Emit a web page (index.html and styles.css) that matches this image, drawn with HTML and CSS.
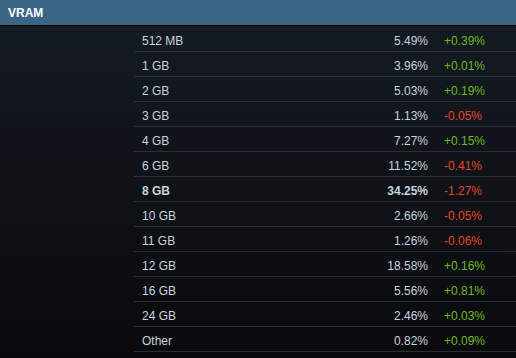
FILE: index.html
```html
<!DOCTYPE html>
<html>
<head>
<meta charset="utf-8">
<link rel="stylesheet" href="styles.css">
</head>
<body>
<div class="panel">
  <div class="header">VRAM</div>
  <div class="rows">
    <div class="row"><span class="label">512 MB</span><span class="pct">5.49%</span><span class="chg up">+0.39%</span></div>
    <div class="row"><span class="label">1 GB</span><span class="pct">3.96%</span><span class="chg up">+0.01%</span></div>
    <div class="row"><span class="label">2 GB</span><span class="pct">5.03%</span><span class="chg up">+0.19%</span></div>
    <div class="row"><span class="label">3 GB</span><span class="pct">1.13%</span><span class="chg down">-0.05%</span></div>
    <div class="row"><span class="label">4 GB</span><span class="pct">7.27%</span><span class="chg up">+0.15%</span></div>
    <div class="row"><span class="label">6 GB</span><span class="pct">11.52%</span><span class="chg down">-0.41%</span></div>
    <div class="row bold"><span class="label">8 GB</span><span class="pct">34.25%</span><span class="chg down">-1.27%</span></div>
    <div class="row"><span class="label">10 GB</span><span class="pct">2.66%</span><span class="chg down">-0.05%</span></div>
    <div class="row"><span class="label">11 GB</span><span class="pct">1.26%</span><span class="chg down">-0.06%</span></div>
    <div class="row"><span class="label">12 GB</span><span class="pct">18.58%</span><span class="chg up">+0.16%</span></div>
    <div class="row"><span class="label">16 GB</span><span class="pct">5.56%</span><span class="chg up">+0.81%</span></div>
    <div class="row"><span class="label">24 GB</span><span class="pct">2.46%</span><span class="chg up">+0.03%</span></div>
    <div class="row"><span class="label">Other</span><span class="pct">0.82%</span><span class="chg up">+0.09%</span></div>
  </div>
</div>
</body>
</html>
```
FILE: styles.css
```css
html, body {
  margin: 0;
  padding: 0;
  height: 100%;
}
body {
  background: linear-gradient(to bottom, #151c25 0%, #0f1217 50%, #0a0a0c 100%);
  font-family: "Liberation Sans", Arial, sans-serif;
  font-size: 12px;
  color: #c6d4df;
}
.panel {
  display: flex;
  flex-direction: column;
}
.header {
  height: 25px;
  line-height: 27px;
  background: #3b6585;
  border-bottom: 1px solid #000;
  color: #fff;
  font-weight: bold;
  padding-left: 8px;
}
.rows {
  padding-top: 1px;
  margin-left: 134px;
  display: flex;
  flex-direction: column;
}
.row {
  display: flex;
  height: 20px;
  padding-top: 4px;
  line-height: 20px;
  border-bottom: 1px solid #2b2f35;
}
.label {
  padding-left: 8px;
  width: 180px;
}
.pct {
  width: 106px;
  text-align: right;
}
.chg {
  padding-left: 16px;
}
.bold .label,
.bold .pct {
  font-weight: bold;
}
.up { color: #6cb91c; }
.down { color: #e2492a; }
```
